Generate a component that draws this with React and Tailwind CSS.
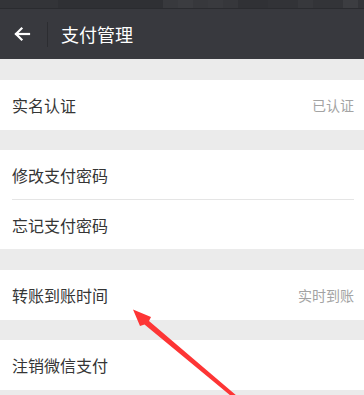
import React from "react";

const blocks = [
  [58, "#333438"],
  [105, "#2f3034"],
  [15, "#38393d"],
  [15, "#3b3c40"],
  [15, "#37383c"],
  [15, "#393a3e"],
  [15, "#36373b"],
  [30, "#303135"],
  [30, "#323337"],
  [15, "#37383c"],
  [30, "#333438"],
  [15, "#3c3d41"],
  [6, "#333438"],
];

function Row({ label, hint, h = "h-[50px]" }) {
  return (
    <div className={`flex ${h} items-center justify-between bg-white pl-3 pr-[10px]`}>
      <span className="text-[16px] text-[#353535]">{label}</span>
      {hint && <span className="text-[14px] text-[#a3a3a3]">{hint}</span>}
    </div>
  );
}

export default function App() {
  return (
    <div
      className="relative h-[395px] w-[364px] overflow-hidden bg-[#ebebeb]"
      style={{ fontFamily: '"Noto Sans CJK SC", "Noto Sans", sans-serif' }}
    >
      <div className="flex h-[8px]">
        {blocks.map(([w, c], i) => (
          <div key={i} style={{ width: w, background: c }} />
        ))}
      </div>
      <div className="h-[1px] bg-[#2a2b2f]" />
      <div className="flex h-[50px] items-center bg-[#38393e]">
        <div className="flex w-[47px] items-center justify-center pr-[3px]">
          <svg width="18" height="16" viewBox="0 0 18 16" fill="none" stroke="#ffffff" strokeWidth="2.2" strokeLinecap="square">
            <path d="M16 8H3" />
            <path d="M8.5 2.5L3 8l5.5 5.5" />
          </svg>
        </div>
        <div className="h-[25px] w-[1px] bg-[#2c2d31]" />
        <span className="ml-[13px] text-[18px] text-white">支付管理</span>
      </div>
      <div className="h-[21px]" />
      <Row label="实名认证" hint="已认证" />
      <div className="h-[20px]" />
      <Row label="修改支付密码" h="h-[49px]" />
      <div className="flex bg-white pl-3 pr-[10px]">
        <div className="h-[1px] flex-1 bg-[#e5e5e5]" />
      </div>
      <Row label="忘记支付密码" h="h-[49px]" />
      <div className="h-[21px]" />
      <Row label="转账到账时间" hint="实时到账" />
      <div className="h-[20px]" />
      <Row label="注销微信支付" />
      <svg className="pointer-events-none absolute left-0 top-0" width="364" height="395" viewBox="0 0 364 395">
        <polygon
          points="133,309.5 151,317 149,321 237,396 231,396 144.5,324.5 140,326"
          fill="#fd3535"
        />
      </svg>
    </div>
  );
}
